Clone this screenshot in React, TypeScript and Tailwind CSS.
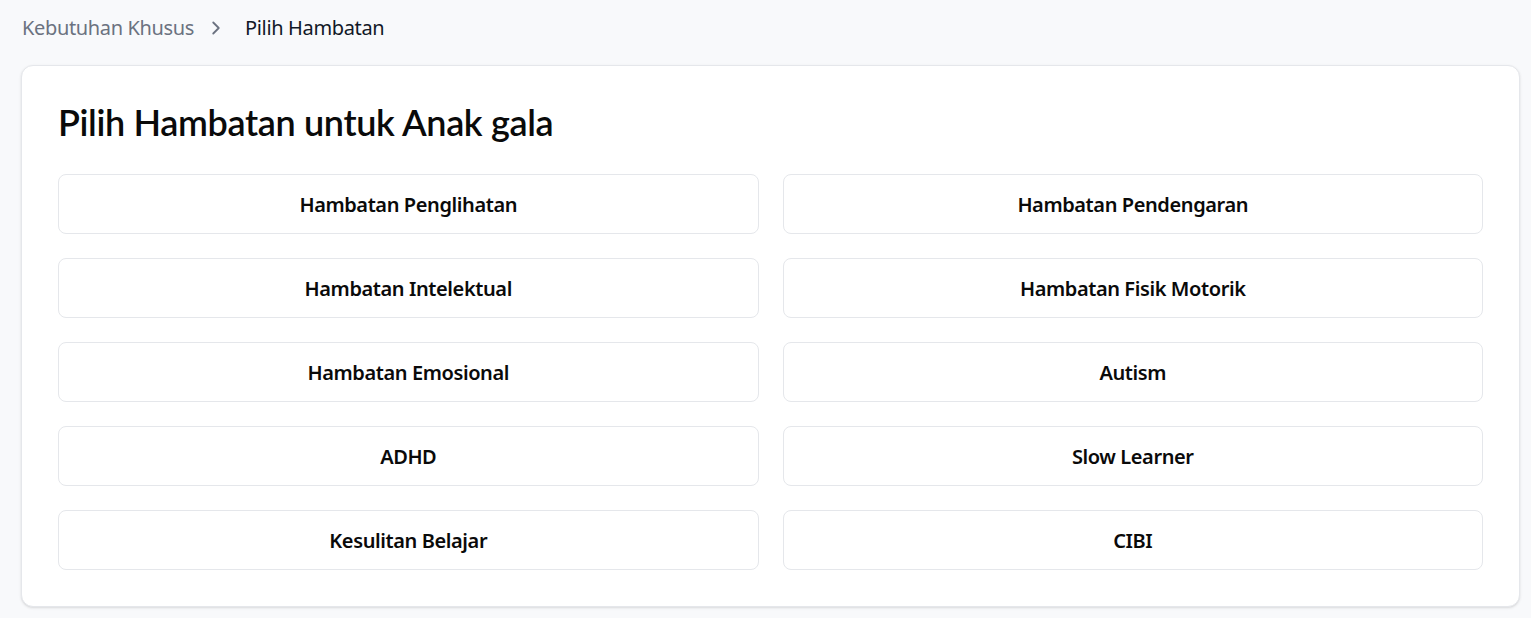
import React from "react";

const items = [
  "Hambatan Penglihatan",
  "Hambatan Pendengaran",
  "Hambatan Intelektual",
  "Hambatan Fisik Motorik",
  "Hambatan Emosional",
  "Autism",
  "ADHD",
  "Slow Learner",
  "Kesulitan Belajar",
  "CIBI",
];

export default function App() {
  return (
    <div
      className="min-h-screen bg-[#f8f9fb] pl-[21px] pr-[11px] pt-[14px] pb-3"
      style={{ fontFamily: '"Noto Sans", "Open Sans", sans-serif' }}
    >
      <nav className="mb-[23px] flex h-7 items-center text-xl tracking-[-0.35px]">
        <span className="pl-px text-[#6b7280]">Kebutuhan Khusus</span>
        <svg
          className="ml-[11px] mr-[18px] h-[22px] w-[22px] text-[#6b7280]"
          viewBox="0 0 24 24"
          fill="none"
          stroke="currentColor"
          strokeWidth="2"
          strokeLinecap="round"
          strokeLinejoin="round"
        >
          <path d="m9 6 6 6-6 6" />
        </svg>
        <span className="text-[#111827]">Pilih Hambatan</span>
      </nav>
      <div className="rounded-xl border border-[#e5e7eb] bg-white p-9 shadow-sm">
        <h1
          className="mb-8 text-4xl font-semibold leading-10 tracking-[-0.35px] text-[#0a0a0a]"
          style={{ fontFamily: 'Lato, "Noto Sans", sans-serif' }}
        >
          Pilih Hambatan untuk Anak gala
        </h1>
        <div className="grid grid-cols-2 gap-6">
          {items.map((it) => (
            <button
              key={it}
              className="flex h-[60px] items-center justify-center rounded-lg border border-[#e5e7eb] bg-white pt-0.5 text-xl font-semibold tracking-[-0.4px] text-[#0a0a0a]"
            >
              {it}
            </button>
          ))}
        </div>
      </div>
    </div>
  );
}
